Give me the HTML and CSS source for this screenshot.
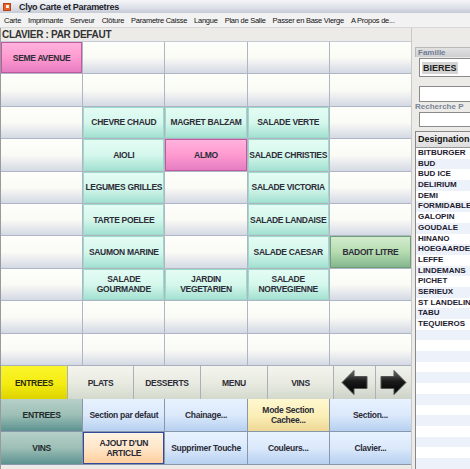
FILE: index.html
```html
<!DOCTYPE html>
<html>
<head>
<meta charset="utf-8">
<link rel="stylesheet" href="styles.css">
</head>
<body>
<div class="window">
  <div class="titlebar">
    <span class="appicon"><span class="appicon-in"></span></span>
    <span class="title">Clyo Carte et Parametres</span>
  </div>
  <div class="menubar">
    <span>Carte</span><span>Imprimante</span><span>Serveur</span><span>Clôture</span><span>Parametre Caisse</span><span>Langue</span><span>Plan de Salle</span><span>Passer en Base Vierge</span><span>A Propos de...</span>
  </div>
  <div class="main">
    <div class="left">
      <div class="clavier">CLAVIER : PAR DEFAUT</div>
      <div class="grid">
        <div class="cell pink">SEME AVENUE</div><div class="cell"></div><div class="cell"></div><div class="cell"></div><div class="cell"></div>
        <div class="cell"></div><div class="cell"></div><div class="cell"></div><div class="cell"></div><div class="cell"></div>
        <div class="cell"></div><div class="cell mint">CHEVRE CHAUD</div><div class="cell mint">MAGRET BALZAM</div><div class="cell mint">SALADE VERTE</div><div class="cell"></div>
        <div class="cell"></div><div class="cell mint">AIOLI</div><div class="cell pink">ALMO</div><div class="cell mint">SALADE CHRISTIES</div><div class="cell"></div>
        <div class="cell"></div><div class="cell mint">LEGUMES GRILLES</div><div class="cell"></div><div class="cell mint">SALADE VICTORIA</div><div class="cell"></div>
        <div class="cell"></div><div class="cell mint">TARTE POELEE</div><div class="cell"></div><div class="cell mint">SALADE LANDAISE</div><div class="cell"></div>
        <div class="cell"></div><div class="cell mint">SAUMON MARINE</div><div class="cell"></div><div class="cell mint">SALADE CAESAR</div><div class="cell green">BADOIT LITRE</div>
        <div class="cell"></div><div class="cell mint">SALADE<br>GOURMANDE</div><div class="cell mint">JARDIN<br>VEGETARIEN</div><div class="cell mint">SALADE<br>NORVEGIENNE</div><div class="cell"></div>
        <div class="cell"></div><div class="cell"></div><div class="cell"></div><div class="cell"></div><div class="cell"></div>
        <div class="cell"></div><div class="cell"></div><div class="cell"></div><div class="cell"></div><div class="cell"></div>
      </div>
      <div class="tabs">
        <div class="tab active">ENTREES</div>
        <div class="tab">PLATS</div>
        <div class="tab">DESSERTS</div>
        <div class="tab">MENU</div>
        <div class="tab">VINS</div>
        <div class="tab arrow">
          <svg width="27" height="27" viewBox="0 0 27 27"><defs><linearGradient id="ag" x1="0" y1="0" x2="0" y2="1"><stop offset="0" stop-color="#6a6a6a"/><stop offset="0.45" stop-color="#1a1a1a"/><stop offset="1" stop-color="#000"/></linearGradient></defs><polygon points="1,13.5 13,1.5 13,7.5 26,7.5 26,19.5 13,19.5 13,25.5" fill="url(#ag)" stroke="#555" stroke-width="1"/></svg>
        </div>
        <div class="tab arrow">
          <svg width="27" height="27" viewBox="0 0 27 27"><defs><linearGradient id="ag2" x1="0" y1="0" x2="0" y2="1"><stop offset="0" stop-color="#6a6a6a"/><stop offset="0.45" stop-color="#1a1a1a"/><stop offset="1" stop-color="#000"/></linearGradient></defs><polygon points="26,13.5 14,1.5 14,7.5 1,7.5 1,19.5 14,19.5 14,25.5" fill="url(#ag2)" stroke="#555" stroke-width="1"/></svg>
        </div>
      </div>
      <div class="actions">
        <div class="act teal">ENTREES</div>
        <div class="act blue">Section par defaut</div>
        <div class="act blue">Chainage...</div>
        <div class="act cream">Mode Section<br>Cachee...</div>
        <div class="act blue">Section...</div>
        <div class="act teal">VINS</div>
        <div class="act peach">AJOUT D'UN<br>ARTICLE</div>
        <div class="act blue">Supprimer Touche</div>
        <div class="act blue">Couleurs...</div>
        <div class="act blue">Clavier...</div>
      </div>
    </div>
    <div class="side">
      <div class="fam-head">Famille</div>
      <div class="combo"><span class="sel">BIERES</span></div>
      <div class="input in1"></div>
      <div class="lbl">Recherche P</div>
      <div class="input in2"></div>
      <div class="table">
        <div class="thead">Designation</div>
        <div class="row">BITBURGER</div>
        <div class="row">BUD</div>
        <div class="row">BUD ICE</div>
        <div class="row">DELIRIUM</div>
        <div class="row">DEMI</div>
        <div class="row">FORMIDABLE</div>
        <div class="row">GALOPIN</div>
        <div class="row">GOUDALE</div>
        <div class="row">HINANO</div>
        <div class="row">HOEGAARDEN</div>
        <div class="row">LEFFE</div>
        <div class="row">LINDEMANS</div>
        <div class="row">PICHET</div>
        <div class="row">SERIEUX</div>
        <div class="row">ST LANDELIN</div>
        <div class="row">TABU</div>
        <div class="row">TEQUIEROS</div>
        <div class="row"></div>
        <div class="row"></div>
        <div class="row"></div>
        <div class="row"></div>
        <div class="row"></div>
        <div class="row"></div>
        <div class="row"></div>
        <div class="row"></div>
        <div class="row"></div>
        <div class="row"></div>
        <div class="row"></div>
        <div class="row"></div>
        <div class="row"></div>
        <div class="row"></div>
      </div>
    </div>
  </div>
</div>
</body>
</html>
```
FILE: styles.css
```css
html, body {
  margin: 0;
  padding: 0;
  background: #ecebe8;
  overflow: hidden;
}
.window {
  width: 470px;
  height: 469px;
  overflow: hidden;
  display: flex;
  flex-direction: column;
  font-family: "Liberation Sans", Arial, sans-serif;
  background: #ecebe8;
}
.titlebar {
  height: 13px;
  flex: none;
  display: flex;
  align-items: center;
  gap: 8px;
  padding-left: 3px;
  background: linear-gradient(#f4f5f8, #dfe2ea 55%, #c6cad6);
}
.appicon {
  width: 8px;
  height: 8px;
  background: #e8602a;
  border: 1px solid #b84418;
  display: flex;
  align-items: center;
  justify-content: center;
  box-sizing: border-box;
}
.appicon-in {
  width: 3px;
  height: 3px;
  background: #fff2e0;
}
.title {
  font-size: 9px;
  font-weight: bold;
  color: #1d1d2a;
  letter-spacing: -0.3px;
}
.menubar {
  height: 15px;
  flex: none;
  display: flex;
  align-items: center;
  gap: 7px;
  padding-left: 4px;
  font-size: 7.5px;
  letter-spacing: -0.25px;
  color: #111;
  background: #f2f2f2;
  border-bottom: 1px solid #d9d9d9;
  box-sizing: border-box;
}
.main {
  flex: 1;
  display: flex;
  min-height: 0;
}
.left {
  width: 411px;
  flex: none;
  display: flex;
  flex-direction: column;
  border-left: 1px solid #9a9a9a;
  box-sizing: border-box;
}
.clavier {
  height: 13px;
  flex: none;
  font-size: 10px;
  font-weight: bold;
  color: #333;
  line-height: 13px;
  padding-left: 1px;
  letter-spacing: -0.3px;
}
.grid {
  height: 324px;
  flex: none;
  display: grid;
  grid-template-columns: repeat(5, 1fr);
  grid-template-rows: repeat(10, 1fr);
  gap: 1px;
  background: #aeb6c6;
  border-top: 1px solid #c4cad6;
  box-sizing: border-box;
}
.cell {
  display: flex;
  align-items: center;
  justify-content: center;
  text-align: center;
  font-size: 8.5px;
  font-weight: bold;
  letter-spacing: -0.3px;
  line-height: 10px;
  white-space: nowrap;
  color: #2d2d38;
  background: linear-gradient(#fefefa, #fbfbf6 50%, #d4d9e4);
}
.cell.mint {
  background: linear-gradient(#e4fdf4, #d6f7ec 50%, #a0e0d0);
  box-shadow: inset 0 0 0 1px #9ed8c8;
}
.cell.pink {
  background: linear-gradient(#ffb4de, #ff9ad0 50%, #e37bc0);
  box-shadow: inset 0 0 0 1px #c05aa0;
}
.cell.green {
  background: linear-gradient(#d4ecd0, #b6dcb0 50%, #80b48c);
  box-shadow: inset 0 0 0 1px #6f9f78;
}
.tabs {
  height: 34px;
  flex: none;
  display: grid;
  grid-template-columns: 66px 65px 66px 66px 65px 41px 1fr;
  gap: 1px;
  background: #a9afbb;
  padding-top: 1px;
  box-sizing: border-box;
}
.tab {
  display: flex;
  align-items: center;
  justify-content: center;
  font-size: 8.5px;
  font-weight: bold;
  letter-spacing: -0.3px;
  color: #2d2d38;
  background: linear-gradient(#f4f5ee, #e9ebe1 50%, #d3d9cd);
}
.tab.active {
  background: linear-gradient(#fbf52c, #f4ec10 55%, #ddd200);
  color: #2a2a10;
}
.tab.arrow {
  background: linear-gradient(#f0f2ec, #e4e7de 50%, #cdd3c8);
}
.actions {
  height: 66px;
  flex: none;
  display: grid;
  grid-template-columns: repeat(5, 1fr);
  grid-template-rows: repeat(2, 1fr);
  gap: 1px;
  background: #8a97ab;
  border-bottom: 1px solid #8a97ab;
  box-sizing: border-box;
}
.act {
  display: flex;
  align-items: center;
  justify-content: center;
  text-align: center;
  font-size: 8.5px;
  font-weight: bold;
  letter-spacing: -0.3px;
  line-height: 10px;
  white-space: nowrap;
  color: #2a2a36;
  background: linear-gradient(#e8f2ff, #dbe9fb 50%, #b6d0f0);
}
.act.teal {
  background: linear-gradient(#b6d0c8, #9dbfb6 50%, #5c9290);
  color: #1f2b2b;
}
.act.cream {
  background: linear-gradient(#fff8d0, #fbefb8 50%, #eed896);
}
.act.peach {
  background: linear-gradient(#fff4e4, #ffe6c8 50%, #ffcc9a);
  box-shadow: inset 0 0 0 1px #33499a;
}
.side {
  flex: 1;
  display: flex;
  flex-direction: column;
  padding-top: 19px;
  padding-left: 3px;
  border-left: 1px solid #c8c8c8;
  min-width: 0;
}
.fam-head {
  height: 9px;
  flex: none;
  font-size: 8px;
  font-weight: bold;
  line-height: 9px;
  color: #6f7c94;
  padding-left: 2px;
  background: linear-gradient(#e2e2e2, #cfcfd2);
  border-top: 1px solid #b8b8b8;
  border-left: 1px solid #b8b8b8;
  white-space: nowrap;
}
.combo {
  flex: none;
  margin: 1px 0 0 4px;
  height: 19px;
  background: #fff;
  border: 1px solid #8a8a8a;
  border-right: none;
  box-sizing: border-box;
  display: flex;
  align-items: center;
  padding-left: 2px;
}
.sel {
  font-size: 9px;
  font-weight: bold;
  color: #222;
  background: #d4d4d4;
  padding: 1px 1px;
  line-height: 10px;
}
.input {
  flex: none;
  margin-left: 4px;
  background: #fff;
  border: 1px solid #8a8a8a;
  border-right: none;
  box-sizing: border-box;
}
.in1 {
  margin-top: 9px;
  height: 16px;
}
.lbl {
  flex: none;
  font-size: 8px;
  font-weight: bold;
  color: #7a8496;
  line-height: 10px;
  white-space: nowrap;
}
.in2 {
  height: 15px;
}
.table {
  margin-top: 4px;
  background: #fff;
  border-left: 1px solid #888;
  border-top: 1px solid #888;
  flex: 1;
  overflow: hidden;
}
.thead {
  height: 15px;
  font-size: 9px;
  font-weight: bold;
  line-height: 15px;
  padding-left: 2px;
  color: #111;
  background: linear-gradient(#f0f0f0, #dedede);
  border-bottom: 1px solid #999;
  white-space: nowrap;
}
.row {
  height: 10.7px;
  font-size: 8px;
  font-weight: bold;
  line-height: 10.7px;
  padding-left: 2px;
  color: #1e2030;
  white-space: nowrap;
}
.row:nth-child(odd) {
  background: #edf2fa;
}
```
